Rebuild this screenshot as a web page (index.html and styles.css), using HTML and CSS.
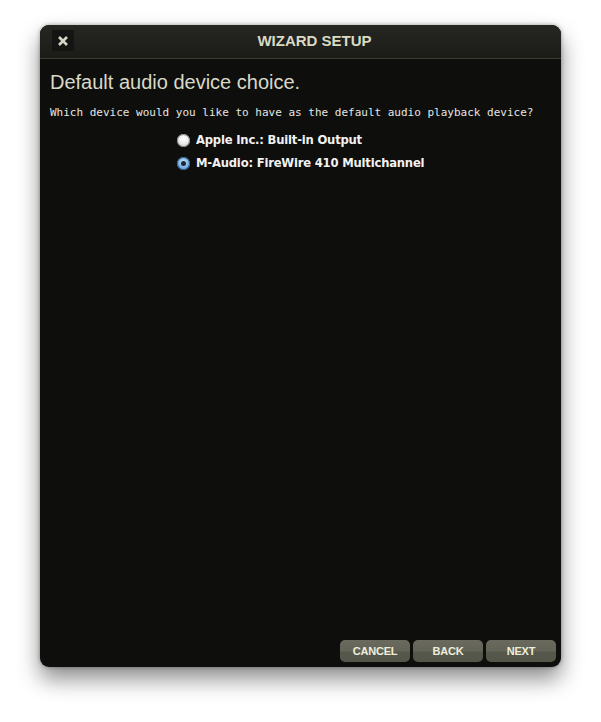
FILE: index.html
```html
<!DOCTYPE html>
<html>
<head>
<meta charset="utf-8">
<link rel="stylesheet" href="styles.css">
</head>
<body>
<div class="window">
  <div class="titlebar">
    <div class="close">
      <svg width="12" height="12" viewBox="0 0 12 12"><path d="M2 2 L10 10 M10 2 L2 10" stroke="#d6d6c6" stroke-width="2.6" stroke-linecap="butt"/></svg>
    </div>
    <div class="title">WIZARD SETUP</div>
  </div>
  <div class="content">
    <h1 class="heading">Default audio device choice.</h1>
    <p class="question">Which device would you like to have as the default audio playback device?</p>
    <div class="options">
      <div class="option"><span class="radio"></span><span class="label">Apple Inc.: Built-in Output</span></div>
      <div class="option"><span class="radio checked"></span><span class="label">M-Audio: FireWire 410 Multichannel</span></div>
    </div>
  </div>
  <div class="footer">
    <button class="btn">CANCEL</button>
    <button class="btn">BACK</button>
    <button class="btn">NEXT</button>
  </div>
</div>
</body>
</html>
```
FILE: styles.css
```css
html, body { margin: 0; padding: 0; background: #fff; }
body { width: 601px; height: 722px; overflow: hidden; }
.window {
  margin: 25px 0 0 40px;
  width: 521px;
  height: 642px;
  background: #0e0e0d;
  border-radius: 9px;
  box-shadow: 0 12px 22px rgba(0,0,0,0.45), 0 0 4px rgba(0,0,0,0.35);
  display: flex;
  flex-direction: column;
  overflow: hidden;
}
.titlebar {
  height: 33px;
  background: linear-gradient(#262622, #1b1b18);
  border-bottom: 1px solid #3a3a33;
  display: flex;
  align-items: center;
  position: relative;
  flex-shrink: 0;
}
.close {
  margin-left: 12px;
  width: 22px;
  height: 21px;
  background: #141412;
  display: flex;
  align-items: center;
  justify-content: center;
  margin-top: -2px;
}
.title {
  position: absolute;
  left: 28px; right: 0; top: 7px;
  text-align: center;
  font-family: "Liberation Sans", Arial, sans-serif;
  font-weight: bold;
  font-size: 15px;
  color: #d9d9c4;
  letter-spacing: 0;
}
.content { padding: 0 10px; flex: 1; }
.heading {
  margin: 11px 0 0 0;
  font-family: "Liberation Sans", Arial, sans-serif;
  font-weight: normal;
  font-size: 20px;
  color: #d9d9c8;
  line-height: 24px;
}
.question {
  margin: 12px 0 0 0;
  font-family: "DejaVu Sans Mono", monospace;
  font-size: 11px;
  color: #e6e6e0;
  line-height: 14px;
}
.options {
  margin: 13px 0 0 127px;
  display: flex;
  flex-direction: column;
  gap: 9px;
}
.option { display: flex; align-items: center; gap: 6px; height: 14px; }
.radio {
  width: 13px; height: 13px; border-radius: 50%;
  background: radial-gradient(circle at 50% 35%, #ffffff 0%, #eeeeee 45%, #b8b8b8 100%);
  box-shadow: inset 0 0 0 1px #888;
  display: inline-block;
  position: relative;
}
.radio.checked {
  background: radial-gradient(circle at 50% 40%, #cfe6fb 0%, #7fb4e6 50%, #3d7bc0 100%);
  box-shadow: inset 0 0 0 1px #305e92;
}
.radio.checked::after {
  content: "";
  position: absolute;
  left: 4px; top: 4px; width: 5px; height: 5px; border-radius: 50%;
  background: #1a2a3a;
}
.label {
  font-family: "DejaVu Sans", Verdana, sans-serif;
  font-weight: bold;
  font-size: 11.6px;
  color: #f2f2f2;
  letter-spacing: -0.2px;
}
.footer {
  display: flex;
  justify-content: flex-end;
  gap: 3px;
  padding: 0 5px 5px 0;
}
.btn {
  width: 70px;
  height: 22px;
  border: none;
  border-radius: 5px;
  background: linear-gradient(#6a6b5e 0%, #636457 50%, #56574b 55%, #55564a 100%);
  font-family: "Liberation Sans", Arial, sans-serif;
  font-weight: bold;
  font-size: 11px;
  color: #eeeedc;
  padding: 0;
  letter-spacing: -0.2px;
}
```
